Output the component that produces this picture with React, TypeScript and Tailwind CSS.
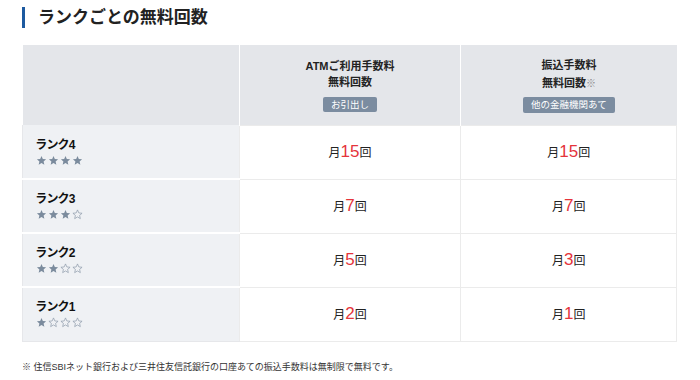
const FONT = "font-['Liberation_Sans','Noto_Sans_CJK_JP',sans-serif]"

type Row = { rank: string; stars: number; atm: string; transfer: string }

const rows: Row[] = [
  { rank: "ランク4", stars: 4, atm: "15", transfer: "15" },
  { rank: "ランク3", stars: 3, atm: "7", transfer: "7" },
  { rank: "ランク2", stars: 2, atm: "5", transfer: "3" },
  { rank: "ランク1", stars: 1, atm: "2", transfer: "1" },
]

function Star({ filled }: { filled: boolean }) {
  return (
    <svg width="11" height="11" viewBox="0 0 24 24">
      <polygon
        points="12,2 14.9,8.6 22,9.3 16.6,14 18.2,21 12,17.3 5.8,21 7.4,14 2,9.3 9.1,8.6"
        fill={filled ? "#7b8b9d" : "none"}
        stroke="#8a98a8"
        strokeWidth={filled ? 0 : 1.5}
        strokeLinejoin="round"
      />
    </svg>
  )
}

function Count({ n }: { n: string }) {
  return (
    <div className="flex items-baseline justify-center text-[#222]">
      <span className="text-[12px]">月</span>
      <span className="text-[17px] leading-none text-[#e5343b]">{n}</span>
      <span className="text-[12px]">回</span>
    </div>
  )
}

export default function App() {
  return (
    <div className={`${FONT} w-[700px] h-[380px] bg-white px-[22px] pt-[7px]`}>
      {/* heading */}
      <div className="flex items-center h-[21px]">
        <div className="w-[3px] h-[21px] bg-[#1d5aa0]" />
        <h2 className="ml-[13px] text-[17px] font-bold leading-[21px] text-[#222]">ランクごとの無料回数</h2>
      </div>

      <table className="mt-[17px] w-[655px] border-collapse">
        <thead>
          <tr className="h-[80px] bg-[#e4e6ea]">
            <th className="w-[217px] border-r border-white" />
            <th className="w-[222px] border-r border-white align-middle">
              <div className="flex flex-col items-center text-[11px] font-bold leading-[16px] text-[#222]">
                <span>ATMご利用手数料</span>
                <span>無料回数</span>
                <span className="mt-[7px] h-[15px] rounded-[2px] bg-[#7b8ca0] px-[8px] text-[9.5px] font-normal leading-[15px] text-white">
                  お引出し
                </span>
              </div>
            </th>
            <th className="w-[216px] align-middle">
              <div className="flex flex-col items-center text-[11px] font-bold leading-[18px] text-[#222]">
                <span>振込手数料</span>
                <span>
                  無料回数<span className="text-[10px] font-normal text-[#8a8a8a]">※</span>
                </span>
                <span className="mt-[4px] h-[16px] rounded-[2px] bg-[#7b8ca0] px-[8px] text-[9.5px] font-normal leading-[16px] text-white">
                  他の金融機関あて
                </span>
              </div>
            </th>
          </tr>
        </thead>
        <tbody>
          {rows.map((r, i) => (
            <tr key={r.rank} className="h-[54px]">
              <td
                className={`bg-[#eff1f4] pl-[13px] align-middle border-l border-[#e6e7ea] ${
                  i < rows.length - 1 ? "border-b-2 border-b-white" : "border-b border-b-[#e6e7ea]"
                }`}
              >
                <div className="text-[12px] font-bold leading-[14px] text-[#111] [font-feature-settings:'palt']">{r.rank}</div>
                <div className="mt-[3px] flex gap-[1px]">
                  {[0, 1, 2, 3].map((s) => (
                    <Star key={s} filled={s < r.stars} />
                  ))}
                </div>
              </td>
              <td className="border border-[#ebebeb] align-middle">
                <Count n={r.atm} />
              </td>
              <td className="border border-[#ebebeb] align-middle">
                <Count n={r.transfer} />
              </td>
            </tr>
          ))}
        </tbody>
      </table>

      <p className="mt-[19px] text-[9px] text-[#333]">
        ※ 住信SBIネット銀行および三井住友信託銀行の口座あての振込手数料は無制限で無料です。
      </p>
    </div>
  )
}
